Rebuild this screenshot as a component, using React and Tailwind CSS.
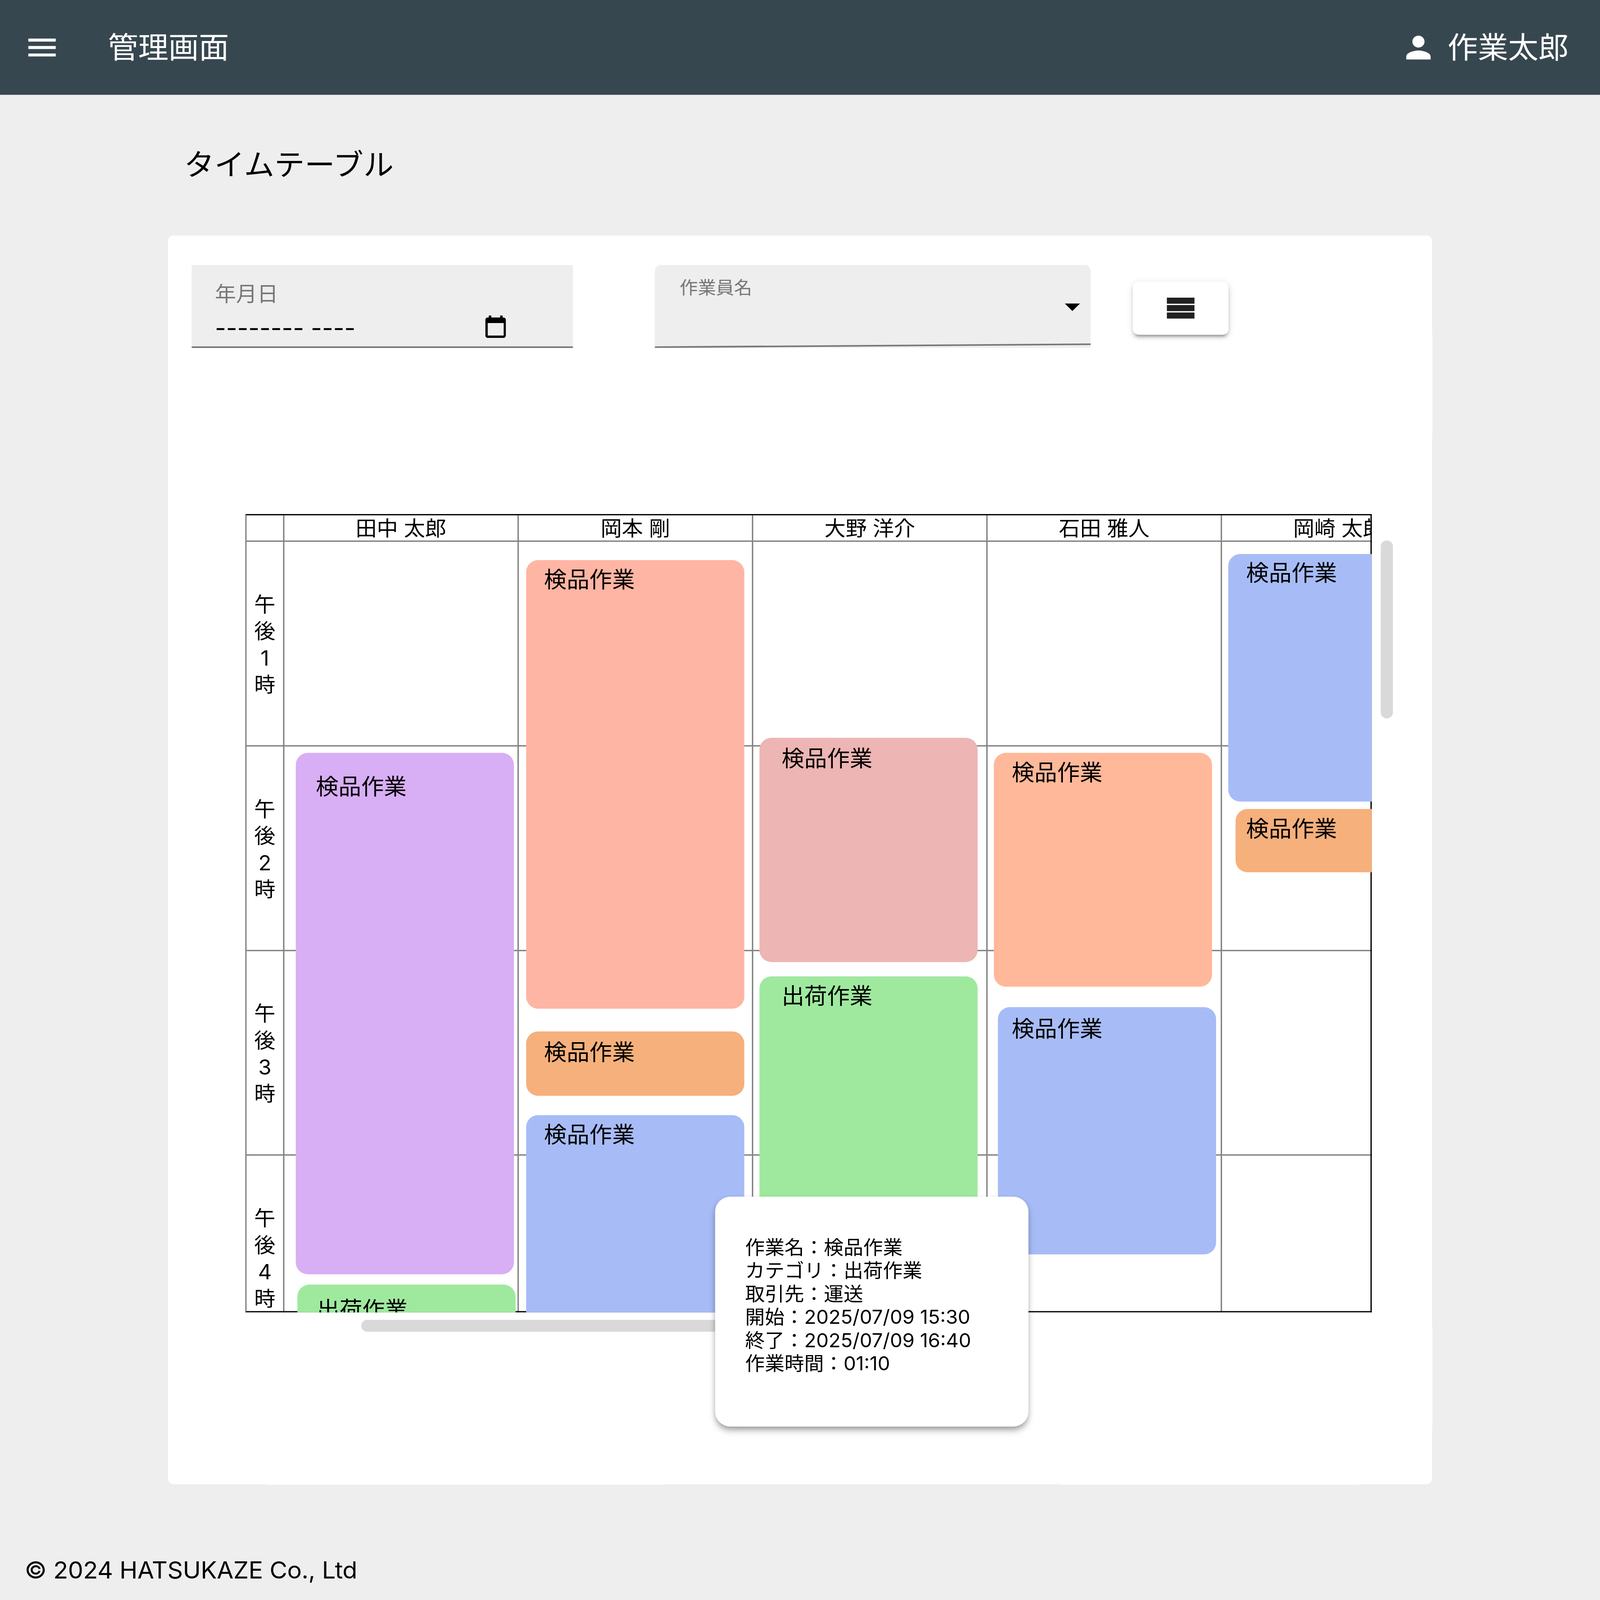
const workers = ["田中 太郎", "岡本 剛", "大野 洋介", "石田 雅人", "岡崎 太郎"];
const hours = ["1", "2", "3", "4"];

const tasks = [
    { name: "検品作業", box: "left-[187px] top-[902px] h-[1969px] bg-[#d8aef5] pl-[74px] pt-[77px]" },
    { name: "出荷作業", box: "left-[193px] top-[2910px] h-[400px] bg-[#9fe99f] pl-[72px] pt-[43px]" },
    { name: "検品作業", box: "left-[1039px] top-[174px] h-[1694px] bg-[#ffb5a3] pl-[66px] pt-[23px]" },
    { name: "検品作業", box: "left-[1039px] top-[1954px] h-[243px] bg-[#f6b07c] pl-[66px] pt-[27px]" },
    { name: "検品作業", box: "left-[1039px] top-[2270px] h-[900px] bg-[#a7bcf6] pl-[66px] pt-[23px]" },
    { name: "検品作業", box: "left-[1902px] top-[845px] h-[847px] bg-[#edb5b3] pl-[82px] pt-[27px]" },
    { name: "出荷作業", box: "left-[1902px] top-[1746px] h-[1400px] bg-[#9fe99f] pl-[82px] pt-[23px]" },
    { name: "検品作業", box: "left-[2769px] top-[902px] h-[883px] bg-[#ffb899] pl-[66px] pt-[23px]" },
    { name: "検品作業", box: "left-[2784px] top-[1862px] h-[934px] bg-[#a7bcf6] pl-[51px] pt-[31px]" },
    { name: "検品作業", box: "left-[3636px] top-[151px] h-[935px] bg-[#a7bcf6] pl-[66px] pt-[20px]" },
    { name: "検品作業", box: "left-[3663px] top-[1114px] h-[239px] bg-[#f6b07c] pl-[39px] pt-[23px]" },
];

const tipLines = [
    "作業名：検品作業",
    "カテゴリ：出荷作業",
    "取引先：運送",
    "開始：2025/07/09 15:30",
    "終了：2025/07/09 16:40",
    "作業時間：01:10",
];

const Filters = () => (
    <div className="flex items-start pl-[88px] pt-[112px]">
        <div className="w-[1410px] h-[313px] shrink-0 bg-[#eeeeee] border-b-[6px] border-[#777777] pl-[86px] pt-[63px]">
            <div className="text-[78px] leading-[94px] text-[#777777]">年月日</div>
            <div className="flex w-[1076px] h-[85px] mt-[33px] justify-between">
                <span className="text-[89.6px] leading-[85px] mt-[4px] text-black">-------- ----</span>
                <svg viewBox="0 0 76 85" className="w-[76px] h-[85px]" fill="#000">
                    <path d="M13 0h9v8h33V0h9v8h3a9 9 0 0 1 9 9v59a9 9 0 0 1-9 9H9a9 9 0 0 1-9-9V17a9 9 0 0 1 9-9h4V0zM9 29v47h59V29H9z" fillRule="evenodd" />
                </svg>
            </div>
        </div>
        <div className="relative w-[1612px] h-[313px] ml-[303px] shrink-0 bg-[#eeeeee] rounded-t-[22px] overflow-hidden pl-[92px] pt-[46px]">
            <div className="text-[67px] leading-[80px] text-[#777777]">作業員名</div>
            <svg viewBox="0 0 24 24" className="absolute right-0 top-[89px] w-[135px] h-[135px]" fill="#000">
                <path d="M7 10l5 5 5-5z" />
            </svg>
            <div className="absolute left-0 bottom-0 w-full h-[6px] bg-[#777777] origin-left -rotate-[0.39deg]" />
        </div>
        <button className="flex items-center justify-center w-[354px] h-[201px] ml-[156px] mt-[62px] shrink-0 bg-white rounded-[22px] shadow-[0_17px_6px_-11px_rgba(0,0,0,0.2),0_11px_11px_0_rgba(0,0,0,0.14),0_6px_28px_0_rgba(0,0,0,0.12)]">
            <div className="flex flex-col gap-[5px]">
                <div className="w-[102px] h-[23px] bg-[#212121]" />
                <div className="w-[102px] h-[23px] bg-[#212121]" />
                <div className="w-[102px] h-[23px] bg-[#212121]" />
            </div>
        </button>
    </div>
);

const TimeTable = () => (
    <div className="relative w-[4167px] h-[3015px] ml-[286px] mt-[627px] overflow-hidden text-black">
        <div className="pl-[5px] pt-[5px] w-[4600px]">
            <div className="flex h-[100px]">
                <div className="w-[140px] shrink-0 border-r-[5.6px] border-b-[5.6px] border-[#7f7f7f]" />
                {workers.map((w) => (
                    <div key={w} className="flex items-center justify-center w-[867px] shrink-0 border-r-[5.6px] border-b-[5.6px] border-[#7f7f7f] text-[78.4px] leading-[95px] pt-[4px]">
                        {w}
                    </div>
                ))}
            </div>
            {hours.map((h) => (
                <div key={h} className="flex h-[772.8px]">
                    <div className="flex flex-col items-center justify-center w-[140px] shrink-0 border-r-[5.6px] border-b-[5.6px] border-[#7f7f7f] text-[78.4px] leading-[101px] pt-[8px]">
                        <span>午</span>
                        <span>後</span>
                        <span>{h}</span>
                        <span>時</span>
                    </div>
                    {workers.map((w) => (
                        <div key={w} className="w-[867px] shrink-0 border-r-[5.6px] border-b-[5.6px] border-[#7f7f7f]" />
                    ))}
                </div>
            ))}
        </div>
        <div className="absolute inset-0 border-t-[5.6px] border-r-[5.6px] border-b-[5.6px] border-l-[5px] border-t-black border-r-black border-b-black border-l-[#7f7f7f]" />
        {tasks.map((t) => (
            <div key={t.box} className={`absolute w-[807px] rounded-[45px] text-[84px] leading-[101px] ${t.box}`}>
                {t.name}
            </div>
        ))}
    </div>
);

const App = () => {
    // the page is drawn at the reference's size and fitted to whatever window it gets
    const fit = `scale(${window.innerWidth / 5918}, ${window.innerHeight / 6042})`;

    return (
        <div className="w-screen h-screen overflow-hidden bg-[#eeeeee]">
            <div style={{ transform: fit }} className="flex flex-col w-[5918px] h-[6042px] origin-top-left font-['Inter','Noto_Sans_CJK_JP',sans-serif]">
                <header className="flex items-center h-[358px] shrink-0 bg-[#37474f] text-white pl-[88px] pr-[116px]">
                    <svg viewBox="0 0 24 24" className="w-[135px] h-[135px]" fill="#fff">
                        <path d="M3 18h18v-2H3v2zm0-5h18v-2H3v2zm0-7v2h18V6H3z" />
                    </svg>
                    <div className="ml-[176px] text-[112px] leading-[134px]">管理画面</div>
                    <svg viewBox="0 0 24 24" className="ml-auto w-[135px] h-[135px]" fill="#fff">
                        <path d="M12 12c2.21 0 4-1.79 4-4s-1.79-4-4-4-4 1.79-4 4 1.79 4 4 4zm0 2c-2.67 0-8 1.34-8 4v2h16v-2c0-2.66-5.33-4-8-4z" />
                    </svg>
                    <div className="ml-[40px] text-[112px] leading-[134px]">作業太郎</div>
                </header>

                <main className="w-[4676px] ml-[621px]">
                    <h1 className="pl-[60px] pt-[197px] pb-[200px] text-[112px] leading-[134px] text-black">タイムテーブル</h1>
                    <section className="relative h-[4716px] bg-white rounded-[22px]">
                        <Filters />
                        <TimeTable />
                        <div className="absolute left-[4486px] top-[1152px] w-[45px] h-[672px] rounded-full bg-[#d9d9d9]" />
                        <div className="absolute left-[715px] top-[4095px] w-[1700px] h-[45px] rounded-full bg-[#d9d9d9]" />
                        <div className="absolute left-[2024px] top-[3630px] w-[1159px] h-[868px] bg-white rounded-[56px] pl-[111px] pt-[148px] text-[72.8px] leading-[87.4px] text-black shadow-[0_17px_28px_-6px_rgba(0,0,0,0.35),0_6px_17px_rgba(0,0,0,0.12)]">
                            {tipLines.map((line) => (
                                <div key={line}>{line}</div>
                            ))}
                        </div>
                    </section>
                </main>

                <footer className="pl-[91px] pt-[270px] text-[89.6px] leading-[108px] tracking-[-0.5px] text-black">© 2024 HATSUKAZE Co., Ltd</footer>
            </div>
        </div>
    );
};

export default App;
